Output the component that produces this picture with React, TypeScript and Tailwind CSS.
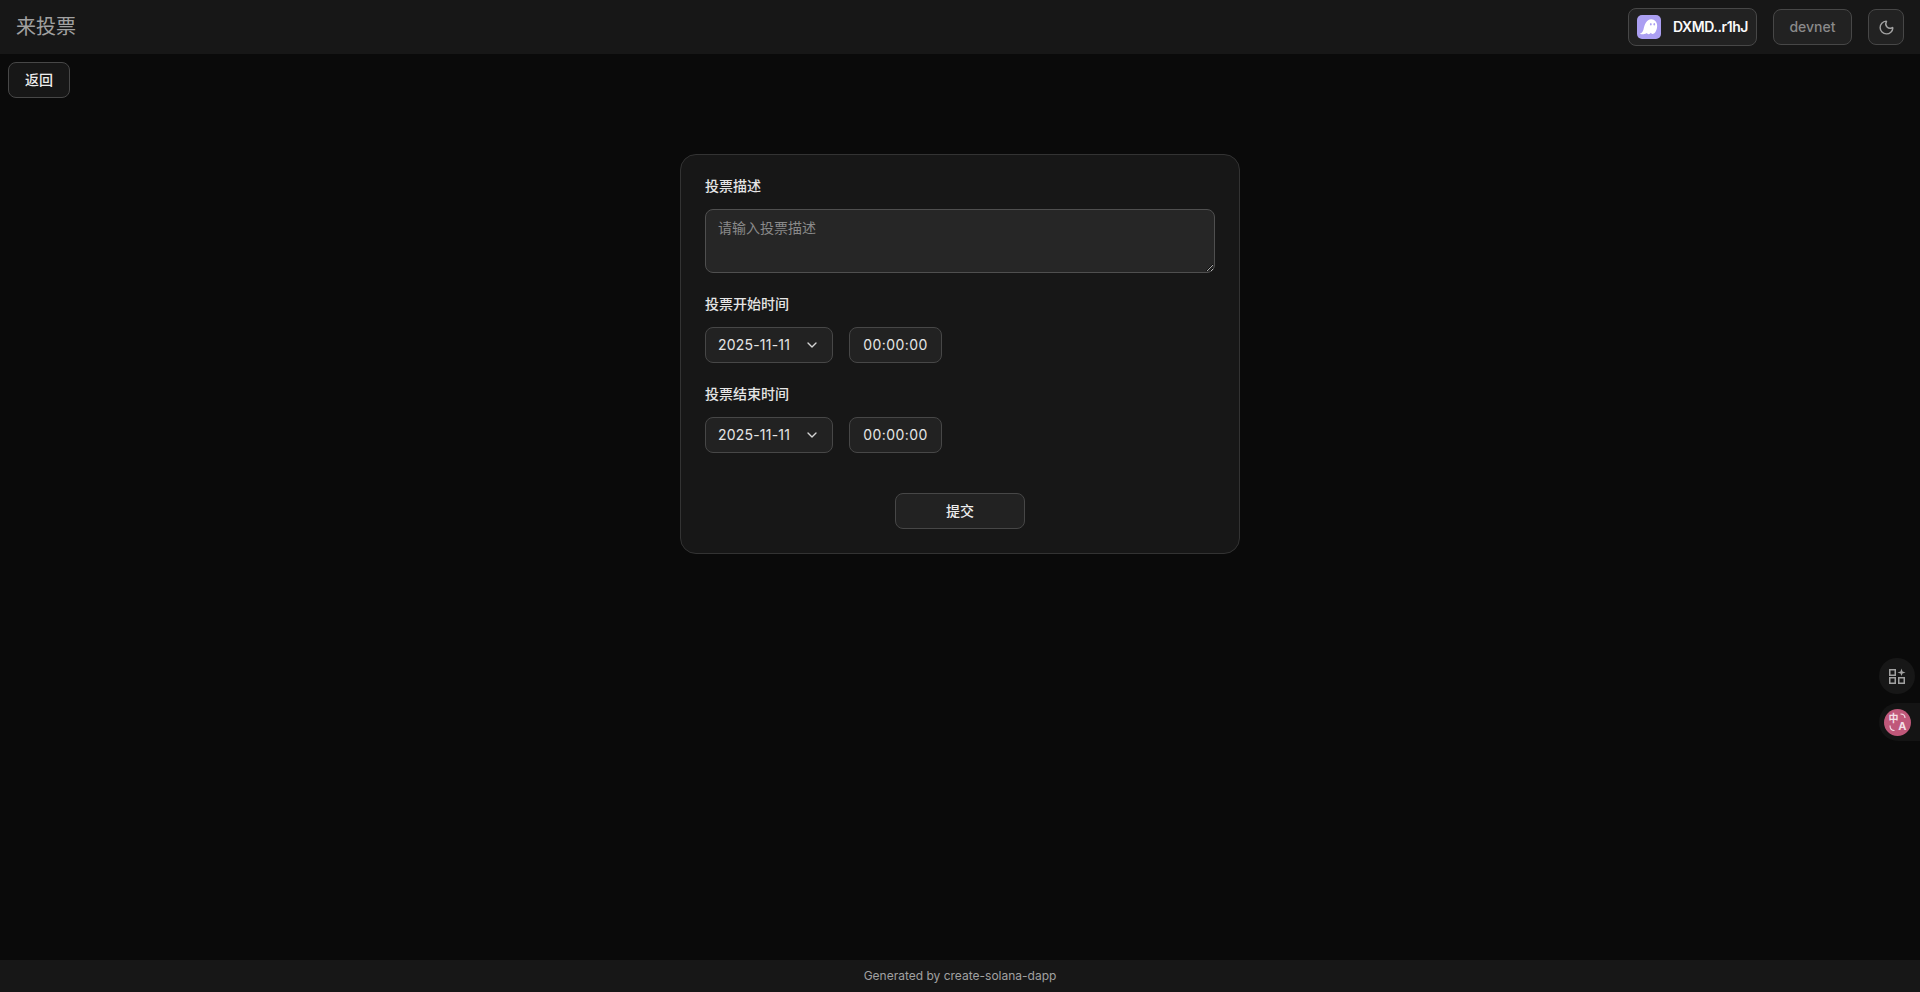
import { ChevronDown, Moon } from "lucide-react"

const sans = "font-['Inter','Noto_Sans_CJK_SC',sans-serif]"
const field = "h-9 rounded-[8px] border border-[#474747] bg-[#222222] text-sm text-[#e5e5e5] flex items-center"

const PhantomLogo = () => (
  <svg viewBox="0 0 24 24" className="w-6 h-6 rounded-[5px]">
    <rect width="24" height="24" fill="#ab9ff2" />
    <g transform="translate(-2.5 -1.5) scale(1.15)">
      <path
        d="M4.5 17.5c1.8 0 2.8-1.6 3.3-3.5C8.8 9.5 10.5 5 14.5 5c3.2 0 5.2 2.6 5.2 5.6 0 3.4-1.7 7.2-4 7.2-.8 0-1.2-.5-1.4-1-.6.8-1.3 1.2-2.1 1.2-.7 0-1.2-.4-1.4-1-.9.6-1.8 1-3 1-1.2 0-2.8-.2-3.3-.5z"
        fill="#fff"
      />
      <ellipse cx="14.2" cy="9.4" rx=".7" ry="1.1" fill="#ab9ff2" />
      <ellipse cx="17.2" cy="9.4" rx=".7" ry="1.1" fill="#ab9ff2" />
    </g>
  </svg>
)

const ToolsIcon = () => (
  <svg viewBox="0 0 18 18" className="w-[18px] h-[18px] text-[#a1a1a1]" fill="none" stroke="currentColor" strokeWidth="1.5">
    <rect x="1.75" y="2.75" width="5.5" height="5.5" />
    <rect x="1.75" y="10.75" width="5.5" height="5.5" />
    <rect x="10.75" y="10.75" width="5.5" height="5.5" />
    <path d="M13.5 1.5l1 3 3 1-3 1-1 2.5-1-2.5-3-1 3-1z" fill="currentColor" stroke="none" />
  </svg>
)

const TranslateIcon = () => (
  <div className="relative w-[18px] h-[19px] text-[#f3dfe6] leading-none">
    <span className="absolute left-0 top-0 text-[10px] font-semibold">中</span>
    <span className="absolute right-0 bottom-0 text-[11px] font-bold">A</span>
    <svg viewBox="0 0 18 19" className="absolute inset-0 w-full h-full" fill="none" stroke="currentColor" strokeWidth="1.1">
      <path d="M11.5 1c2.5 0 4.5 1.3 4.5 4" />
      <path d="M1 12.5c0 3 1.7 5 4.5 5" />
    </svg>
  </div>
)

const DateTimeRow = () => (
  <div className="flex gap-4">
    <button type="button" className={`${field} w-32 pl-3 pr-3 justify-between`}>
      <span className="tracking-[0.2px]">2025-11-11</span>
      <ChevronDown className="w-4 h-4 text-[#d4d4d4]" />
    </button>
    <div className={`${field} w-[93px] justify-center tracking-[0.4px]`}>00:00:00</div>
  </div>
)

export default function App() {
  return (
    <div className={`${sans} relative min-h-screen flex flex-col bg-[#0a0a0a] text-[#fafafa]`}>
      <header className="h-[54px] bg-[#171717] flex items-center justify-between pl-4 pr-4">
        <span className="text-xl text-[#a1a1a1]">来投票</span>
        <div className="flex items-center gap-4">
          <button className="h-[38px] w-[129px] rounded-[8px] border border-[#474747] bg-[#222222] flex items-center pl-2 gap-3 text-sm font-semibold tracking-[-0.4px]">
            <PhantomLogo />
            <span>DXMD..r1hJ</span>
          </button>
          <button className="h-9 w-[79px] rounded-[8px] border border-[#474747] bg-[#222222] text-sm font-medium text-[#8a8a8a]">
            devnet
          </button>
          <button className="w-9 h-9 rounded-[8px] border border-[#474747] bg-[#222222] flex items-center justify-center">
            <Moon className="w-[17px] h-[17px] text-[#a1a1a1]" />
          </button>
        </div>
      </header>

      <main className="flex-1 flex flex-col">
        <div className="pt-2 pl-2">
          <button className="h-9 w-[62px] rounded-[8px] border border-[#474747] bg-[#171717] text-sm font-medium text-[#ededed]">返回</button>
        </div>
        <div className="flex justify-center mt-14">
          <form className="w-[560px] h-[400px] rounded-[16px] border border-[#333333] bg-[#171717] px-6 pt-[21px]">
            <label className="block text-sm font-medium text-[#e5e5e5] leading-5">投票描述</label>
            <textarea
              placeholder="请输入投票描述"
              className="block w-full h-16 mt-[13px] rounded-[8px] border border-[#4f4f4f] bg-[#262626] px-3 py-2 text-sm leading-5 placeholder:text-[#8a8a8a] outline-none"
            />
            <label className="block text-sm font-medium text-[#e5e5e5] leading-5 mt-[21px]">投票开始时间</label>
            <div className="mt-[13px]">
              <DateTimeRow />
            </div>
            <label className="block text-sm font-medium text-[#e5e5e5] leading-5 mt-[21px]">投票结束时间</label>
            <div className="mt-[13px]">
              <DateTimeRow />
            </div>
            <div className="flex justify-center mt-10">
              <button type="button" className="h-9 w-[130px] rounded-[8px] border border-[#474747] bg-[#222222] text-sm font-medium text-[#ededed]">
                提交
              </button>
            </div>
          </form>
        </div>
      </main>

      <footer className="h-8 bg-[#171717] flex items-center justify-center text-xs text-[#a1a1a1]">
        Generated by create-solana-dapp
      </footer>

      <div className="absolute right-[5px] top-[658px] w-9 h-9 rounded-full bg-[#171717] flex items-center justify-center">
        <ToolsIcon />
      </div>
      <div className="absolute right-0 top-[703px] w-[41px] h-[38px] rounded-l-full bg-[#141414] flex items-center pl-[5px]">
        <div className="w-[27px] h-[27px] rounded-full bg-[#c0587a] flex items-center justify-center">
          <TranslateIcon />
        </div>
      </div>
    </div>
  )
}
